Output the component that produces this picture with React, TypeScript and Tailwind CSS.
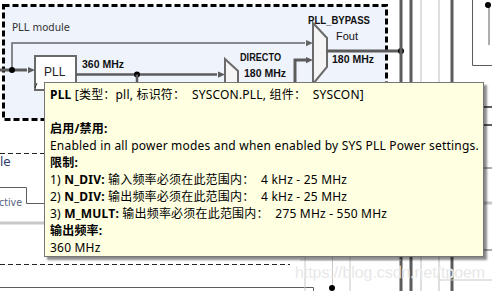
import React from "react";

const LINE = "#5c5c5c";

function Arrow({ x, y, color = LINE, size = 6 }: { x: number; y: number; color?: string; size?: number }) {
  // arrowhead pointing right, tip at (x, y)
  return <polygon points={`${x},${y} ${x - size * 1.4},${y - size / 1.6} ${x - size * 1.4},${y + size / 1.6}`} fill={color} />;
}

function Diagram() {
  return (
    <svg className="absolute inset-0" width={492} height={291} viewBox="0 0 492 291">
      {/* PLL module group */}
      <rect x={3.5} y={5.5} width={383} height={114} fill="#eff3fc" stroke="#000" strokeWidth={3} strokeDasharray="6 3" />
      <text x={12} y={31} fontSize={11} fontFamily="Tahoma, 'DejaVu Sans', sans-serif" fill="#333" textLength={58} lengthAdjust="spacingAndGlyphs">
        PLL module
      </text>

      {/* bypass wire */}
      <path d="M12 70 V43 H305" fill="none" stroke="#666" strokeWidth={1.5} />
      <Arrow x={313} y={43} color="#666" size={5} />

      {/* input */}
      <path d="M0 70 H27" stroke={LINE} strokeWidth={3} />
      <Arrow x={35} y={70} size={5} />
      <circle cx={12} cy={70} r={3} fill="#000" />

      {/* PLL block */}
      <rect x={35} y={56} width={41} height={34} fill="#fff" stroke="#6a6a6a" strokeWidth={2} />
      <text x={44} y={76} fontSize={12} fontFamily="'Liberation Sans', Arial, sans-serif" fill="#222">
        PLL
      </text>
      <path d="M35 88 L37 83" stroke="#333" strokeWidth={1} />
      <text x={82} y={68} fontSize={11} fontWeight={700} fontFamily="'Liberation Sans', Arial, sans-serif" fill="#111" textLength={42} lengthAdjust="spacingAndGlyphs">
        360 MHz
      </text>

      {/* PLL -> DIRECTO */}
      <path d="M76 74.5 H217" stroke={LINE} strokeWidth={2.5} />
      <Arrow x={225} y={74.5} size={5} />
      <circle cx={137} cy={74.5} r={3} fill="#000" />
      <path d="M137 74.5 V95" stroke={LINE} strokeWidth={2.5} />

      {/* DIRECTO */}
      <polygon points="225,59 238,71 238,95 225,95" fill="#f5f5f5" stroke="#6a6a6a" strokeWidth={2} />
      <text x={240} y={61} fontSize={11} fontWeight={700} fontFamily="'Liberation Sans', Arial, sans-serif" fill="#111" textLength={41} lengthAdjust="spacingAndGlyphs">
        DIRECTO
      </text>
      <text x={244} y={77} fontSize={11} fontWeight={700} fontFamily="'Liberation Sans', Arial, sans-serif" fill="#111" textLength={42} lengthAdjust="spacingAndGlyphs">
        180 MHz
      </text>

      {/* DIRECTO out -> mux */}
      <path d="M295 95 V60 H306" fill="none" stroke={LINE} strokeWidth={3} />
      <Arrow x={313} y={60} size={5} />

      {/* PLL_BYPASS mux */}
      <polygon points="313,23 327,38 327,67 313,84" fill="#f4f4f4" stroke="#6a6a6a" strokeWidth={2} />
      <text x={308} y={24} fontSize={11} fontWeight={700} fontFamily="'Liberation Sans', Arial, sans-serif" fill="#111" textLength={62} lengthAdjust="spacingAndGlyphs">
        PLL_BYPASS
      </text>
      <text x={336} y={40} fontSize={11} fontFamily="'Liberation Sans', Arial, sans-serif" fill="#111" textLength={22} lengthAdjust="spacingAndGlyphs">
        Fout
      </text>
      <text x={332} y={63} fontSize={11} fontWeight={700} fontFamily="'Liberation Sans', Arial, sans-serif" fill="#111" textLength={42} lengthAdjust="spacingAndGlyphs">
        180 MHz
      </text>
      <path d="M327 51 H401" stroke={LINE} strokeWidth={3} />
      <circle cx={401} cy={51} r={3} fill="#000" />

      {/* bus lines on the right */}
      <path d="M401 0 V291" stroke={LINE} strokeWidth={3} />
      <path d="M411 0 V291" stroke={LINE} strokeWidth={3} />
      <path d="M421 0 V291" stroke="#bdbdbd" strokeWidth={1} />
      <path d="M439 0 V291" stroke="#bdbdbd" strokeWidth={1} />
      <path d="M452 0 V291" stroke={LINE} strokeWidth={3} />
      <path d="M472.5 0 V65.5 H492" fill="none" stroke={LINE} strokeWidth={1} />
      <path d="M489 5 V45" stroke={LINE} strokeWidth={1} />
      <circle cx={488} cy={5} r={3} fill="#000" />
      <path d="M484 107 H492" stroke={LINE} strokeWidth={2} />
      <path d="M484 125 H492" stroke={LINE} strokeWidth={2} />
      <path d="M484 168 H492" stroke={LINE} strokeWidth={1} />
      <path d="M484 203 H492" stroke="#c8c8c8" strokeWidth={3} />
      <path d="M484 250 H492" stroke={LINE} strokeWidth={1} />
      <path d="M440 280 H492" stroke="#c8c8c8" strokeWidth={1} />

      {/* left side fragments */}
      <path d="M0 153.5 H44" stroke="#222" strokeWidth={1} strokeDasharray="5 3" />
      <text x={0} y={166} fontSize={12} fontFamily="Tahoma, 'DejaVu Sans', sans-serif" fill="#2a3a6a">
        le
      </text>
      <path d="M0 187.5 H26.5 V203.5 H44" fill="none" stroke={LINE} strokeWidth={1} />
      <text x={-1} y={206} fontSize={11} fontFamily="Tahoma, 'DejaVu Sans', sans-serif" fill="#54607e" textLength={23} lengthAdjust="spacingAndGlyphs">
        ctive
      </text>
      <path d="M0 223 H44" stroke="#c8c8c8" strokeWidth={3} />

      {/* bottom fragments */}
      <path d="M0 264.5 H290" stroke="#222" strokeWidth={1} strokeDasharray="5 3" />
      <path d="M0 287.5 H313.5 V291" fill="none" stroke={LINE} strokeWidth={1} />
      <path d="M305 257 V291" stroke="#c8c8c8" strokeWidth={1} />
      <path d="M332.5 257 V291" stroke="#c8c8c8" strokeWidth={1} />
      <path d="M350 257 V291" stroke="#c8c8c8" strokeWidth={1} />
      <path d="M300 260 H401" stroke="#d0d0d0" strokeWidth={1} />
      <circle cx={332} cy={288} r={3} fill="#000" />

      {/* watermark */}
      <text x={295} y={278} fontSize={16} fontFamily="'Liberation Sans', Arial, sans-serif" fill="#dedede" stroke="#ffffff" strokeWidth={0.3} textLength={190} lengthAdjust="spacingAndGlyphs">
        https://blog.csdn.net/tpoem
      </text>
    </svg>
  );
}

function Tip() {
  return (
    <div className="absolute left-[44px] top-[82px] w-[440px] h-[175px] border border-[#767676] bg-[#ffffe1] px-[5px] pt-[3px] shadow-[3px_3px_2px_rgba(0,0,0,0.45)] font-['Noto_Sans','Noto_Sans_CJK_SC',sans-serif] text-[12px] leading-[17px] tracking-[0.2px] text-black whitespace-pre">
      <div>
        <b>PLL</b> [类型：pll, 标识符：  SYSCON.PLL, 组件：  SYSCON]
      </div>
      <div>&nbsp;</div>
      <div className="font-bold">启用/禁用:</div>
      <div>Enabled in all power modes and when enabled by SYS PLL Power settings.</div>
      <div className="font-bold">限制:</div>
      <div>
        1) <b>N_DIV:</b> 输入频率必须在此范围内：  4 kHz - 25 MHz
      </div>
      <div>
        2) <b>N_DIV:</b> 输出频率必须在此范围内：  4 kHz - 25 MHz
      </div>
      <div>
        3) <b>M_MULT:</b> 输出频率必须在此范围内：  275 MHz - 550 MHz
      </div>
      <div className="font-bold">输出频率:</div>
      <div>360 MHz</div>
    </div>
  );
}

export default function App() {
  return (
    <div className="relative w-[492px] h-[291px] overflow-hidden bg-white">
      <Diagram />
      <Tip />
    </div>
  );
}
